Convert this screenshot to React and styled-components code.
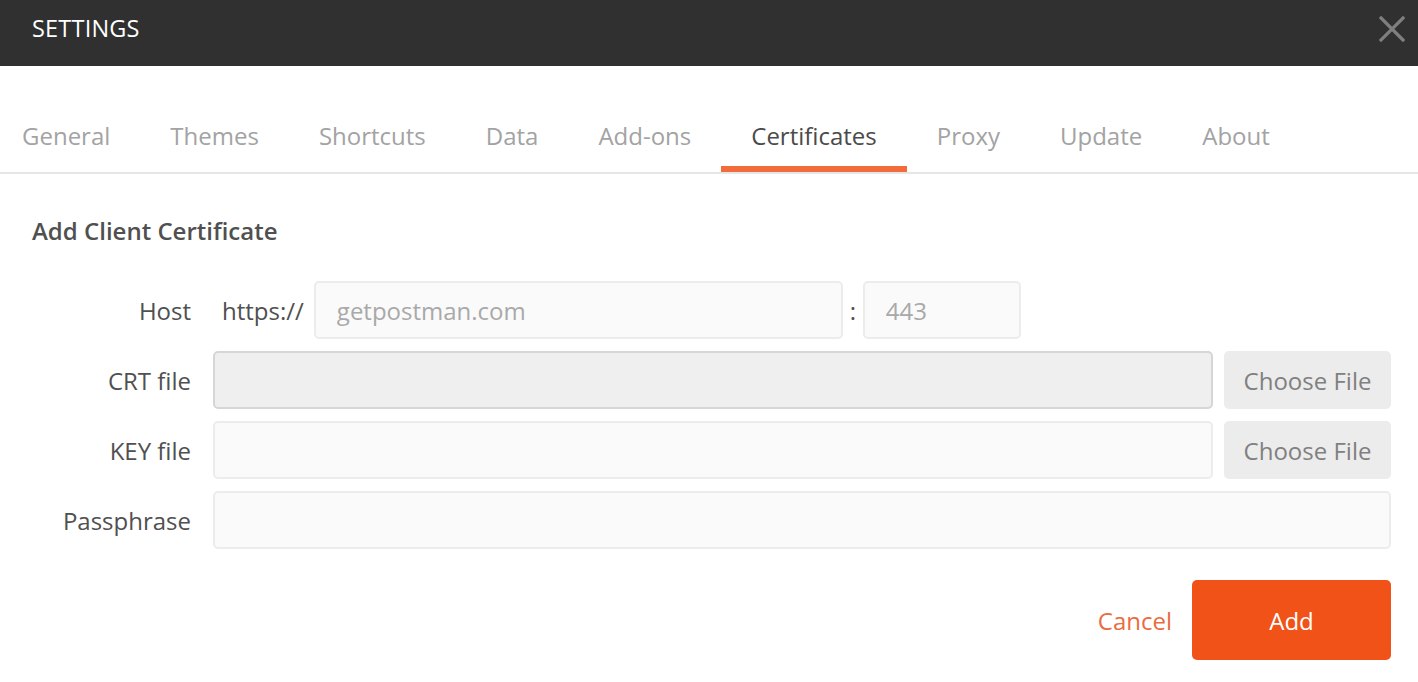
import React from "react";
import styled, { createGlobalStyle } from "styled-components";

const Global = createGlobalStyle`
  html, body { margin: 0; padding: 0; background: #ffffff; }
  body { font-family: "Open Sans", "Liberation Sans", sans-serif; }
  * { box-sizing: border-box; }
`;

const Page = styled.div`
  width: 1418px;
  height: 682px;
  background: #ffffff;
  overflow: hidden;
`;

const Header = styled.header`
  height: 66px;
  background: #303030;
  display: flex;
  align-items: center;
  justify-content: space-between;
  padding: 0 13px 11px 32px;
`;

const Title = styled.h1`
  margin: 0;
  font-size: 23.5px;
  font-weight: 400;
  color: #ffffff;
  letter-spacing: 0.2px;
`;

const CloseButton = styled.button`
  border: 0;
  background: transparent;
  padding: 0;
  width: 26px;
  height: 26px;
  display: flex;
  align-items: center;
  justify-content: center;
  cursor: pointer;
  margin-top: 2px;
`;

const TabBar = styled.nav`
  margin-top: 32px;
  display: flex;
  border-bottom: 2px solid #e6e6e6;
`;

const Tab = styled.div`
  padding: 6px 30px 0;
  height: 74px;
  display: flex;
  align-items: center;
  font-size: 24px;
  color: ${(p) => (p.$active ? "#4a4a4a" : "#a3a3a3")};
  border-bottom: 6px solid ${(p) => (p.$active ? "#f26b3a" : "transparent")};
  margin-left: ${(p) => (p.$first ? "-8px" : "0")};
  white-space: nowrap;
`;

const Content = styled.section`
  padding: 42px 27px 0 32px;
`;

const Heading = styled.h2`
  margin: 0 0 35px 0;
  font-size: 24px;
  font-weight: 600;
  color: #505050;
  line-height: 30px;
`;

const Form = styled.div`
  display: grid;
  grid-template-columns: 159px 1fr;
  column-gap: 22px;
  row-gap: 12px;
  align-items: center;
`;

const Label = styled.label`
  text-align: right;
  font-size: 24px;
  color: #505050;
`;

const Field = styled.div`
  display: flex;
  align-items: center;
  gap: 11px;
`;

const Prefix = styled.span`
  font-size: 24px;
  color: #505050;
  margin-left: 9px;
  margin-right: -1px;
`;

const Colon = styled.span`
  font-size: 24px;
  color: #505050;
  width: 8px;
  text-align: center;
  margin: 0 -5px;
`;

const Input = styled.input`
  height: 58px;
  width: ${(p) => p.$width || "auto"};
  flex: ${(p) => (p.$width ? "0 0 auto" : "1 1 auto")};
  min-width: 0;
  border-radius: 5px;
  border: ${(p) => (p.$disabled ? "2px solid #d6d6d6" : "2px solid #ececec")};
  background: ${(p) => (p.$disabled ? "#efefef" : "#fafafa")};
  padding: 0 21px;
  font-family: "Open Sans", "Liberation Sans", sans-serif;
  font-size: 24px;
  color: #505050;
  outline: none;
  &::placeholder { color: #a9a9a9; }
`;

const FileButton = styled.button`
  height: 58px;
  width: 167px;
  flex: 0 0 auto;
  border: 0;
  border-radius: 5px;
  background: #ececec;
  color: #808080;
  font-family: "Open Sans", "Liberation Sans", sans-serif;
  font-size: 24px;
  padding: 0;
  cursor: pointer;
`;

const Actions = styled.div`
  display: flex;
  justify-content: flex-end;
  align-items: center;
  gap: 20px;
  margin-top: 31px;
`;

const CancelButton = styled.button`
  border: 0;
  background: transparent;
  color: #ea6c3e;
  font-family: "Open Sans", "Liberation Sans", sans-serif;
  font-size: 24px;
  padding: 0;
  cursor: pointer;
`;

const AddButton = styled.button`
  width: 199px;
  height: 80px;
  border: 0;
  border-radius: 5px;
  background: #f05217;
  color: #ffffff;
  font-family: "Open Sans", "Liberation Sans", sans-serif;
  font-size: 24px;
  cursor: pointer;
`;

const tabs = ["General", "Themes", "Shortcuts", "Data", "Add-ons", "Certificates", "Proxy", "Update", "About"];

export default function App() {
  return (
    <Page>
      <Global />
      <Header>
        <Title>SETTINGS</Title>
        <CloseButton aria-label="Close">
          <svg width="26" height="26" viewBox="0 0 26 26">
            <path d="M2 2 L24 24 M24 2 L2 24" stroke="#7f7f7f" strokeWidth="3.2" strokeLinecap="square" />
          </svg>
        </CloseButton>
      </Header>
      <TabBar>
        {tabs.map((t, i) => (
          <Tab key={t} $first={i === 0} $active={t === "Certificates"}>
            {t}
          </Tab>
        ))}
      </TabBar>
      <Content>
        <Heading>Add Client Certificate</Heading>
        <Form>
          <Label>Host</Label>
          <Field>
            <Prefix>https://</Prefix>
            <Input $width="529px" placeholder="getpostman.com" />
            <Colon>:</Colon>
            <Input $width="158px" placeholder="443" />
          </Field>
          <Label>CRT file</Label>
          <Field>
            <Input $disabled readOnly />
            <FileButton>Choose File</FileButton>
          </Field>
          <Label>KEY file</Label>
          <Field>
            <Input />
            <FileButton>Choose File</FileButton>
          </Field>
          <Label>Passphrase</Label>
          <Field>
            <Input type="password" />
          </Field>
        </Form>
        <Actions>
          <CancelButton>Cancel</CancelButton>
          <AddButton>Add</AddButton>
        </Actions>
      </Content>
    </Page>
  );
}
